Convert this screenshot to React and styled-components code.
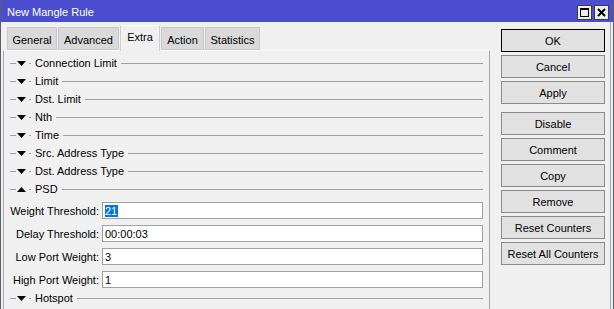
import React from 'react';
import styled, { createGlobalStyle } from 'styled-components';

const GlobalStyle = createGlobalStyle`
  body {
    margin: 0;
    background: #f0f0f0;
    font-family: "Liberation Sans", Arial, sans-serif;
    font-size: 11px;
    color: #000;
  }
`;

const Window = styled.div`
  width: 614px;
  height: 309px;
  box-sizing: border-box;
  border-left: 1px solid #5c5c6c;
  border-right: 1px solid #5c5c6c;
  background: #f0f0f0;
  display: flex;
  flex-direction: column;
  overflow: hidden;
`;

const TitleBar = styled.div`
  height: 22px;
  flex-shrink: 0;
  background: #4b4fcf;
  color: #fff;
  display: flex;
  align-items: center;
  padding: 2px 4px 0 6px;
  box-sizing: border-box;
  font-size: 11px;
`;

const Title = styled.span`
  flex: 1;
`;

const TitleButton = styled.div`
  width: 15px;
  height: 15px;
  box-sizing: border-box;
  margin-left: 2px;
  background: #ececec;
  border: 1px solid #3c3c3c;
  display: flex;
  align-items: center;
  justify-content: center;
`;

const Body = styled.div`
  flex: 1;
  display: flex;
  min-height: 0;
  border-right: 1px solid #a8a8a8;
  margin-right: 2px;
`;

const LeftCol = styled.div`
  width: 487px;
  margin-left: 2px;
  display: flex;
  flex-direction: column;
`;

const TabStrip = styled.div`
  height: 28px;
  display: flex;
  align-items: flex-end;
  padding-left: 4px;
  position: relative;
  z-index: 1;
`;

const Tab = styled.div`
  width: ${p => p.$w}px;
  height: ${p => (p.$active ? 26 : 23)}px;
  margin-bottom: ${p => (p.$active ? -1 : 0)}px;
  margin-right: 1px;
  box-sizing: border-box;
  background: ${p => (p.$active ? '#f0f0f0' : '#d9d9d9')};
  border: 1px solid ${p => (p.$active ? '#d0d0d0' : '#c8c8c8')};
  border-bottom: ${p => (p.$active ? 'none' : '1px solid #c8c8c8')};
  border-top-color: ${p => (p.$active ? '#fff' : '#c8c8c8')};
  display: flex;
  justify-content: center;
  padding-top: ${p => (p.$active ? 5 : 6)}px;
  font-size: 11px;
`;

const Panel = styled.div`
  flex: 1;
  border-top: 1px solid #fff;
  border-left: 1px solid #a8a8a8;
  border-right: 1px solid #a8a8a8;
  padding-top: 3px;
  display: flex;
  flex-direction: column;
`;

const SectionRow = styled.div`
  height: 18px;
  flex-shrink: 0;
  display: flex;
  align-items: center;
  margin-top: ${p => p.$mt || 0}px;
`;

const Rule = styled.div`
  height: 1px;
  background: #a0a0a0;
  width: ${p => (p.$w ? `${p.$w}px` : 'auto')};
  flex: ${p => (p.$w ? '0 0 auto' : '1')};
  margin-left: ${p => p.$ml || 0}px;
  margin-right: ${p => p.$mr || 0}px;
`;

const Arrow = styled.svg`
  margin-left: 1px;
  flex-shrink: 0;
`;

const SectionLabel = styled.span`
  margin-left: 4px;
  margin-right: 4px;
  font-size: 11px;
  white-space: nowrap;
`;

const Fields = styled.div`
  display: flex;
  flex-direction: column;
  gap: 6px;
  margin-top: 4px;
`;

const FieldRow = styled.div`
  display: flex;
  align-items: center;
  height: 17px;
`;

const FieldLabel = styled.label`
  width: 95px;
  text-align: right;
  font-size: 11px;
  white-space: nowrap;
  margin-right: 3px;
`;

const Input = styled.div`
  flex: 1;
  height: 17px;
  box-sizing: border-box;
  margin-right: 6px;
  background: #fff;
  border: 1px solid #a2a2a2;
  padding: 0 2px;
  display: flex;
  align-items: center;
  font-size: 11px;
`;

const Selected = styled.span`
  background: #0078d7;
  color: #fff;
  line-height: 12px;
  padding-right: 1px;
`;

const RightCol = styled.div`
  width: 104px;
  margin-left: 11px;
  padding-top: 7px;
  display: flex;
  flex-direction: column;
  gap: 3px;
`;

const Button = styled.div`
  height: 23px;
  box-sizing: border-box;
  background: #e1e1e1;
  border: 1px solid ${p => (p.$default ? '#000' : '#8a8a8a')};
  display: flex;
  align-items: center;
  justify-content: center;
  font-size: 11px;
  margin-top: ${p => p.$mt || 0}px;
`;

const Section = ({ label, open, mt }) => (
  <SectionRow $mt={mt}>
    <Rule $w={6} $ml={6} />
    <Arrow width="9" height="5" viewBox="0 0 9 5">
      {open ? <polygon points="0,5 9,5 4.5,0" fill="#000" /> : <polygon points="0,0 9,0 4.5,5" fill="#000" />}
    </Arrow>
    <Rule $w={2} $ml={3} />
    <SectionLabel>{label}</SectionLabel>
    <Rule $mr={6} />
  </SectionRow>
);

const tabs = [
  { name: 'General', w: 50 },
  { name: 'Advanced', w: 61 },
  { name: 'Extra', w: 40, active: true },
  { name: 'Action', w: 43 },
  { name: 'Statistics', w: 55 },
];

const collapsed = ['Connection Limit', 'Limit', 'Dst. Limit', 'Nth', 'Time', 'Src. Address Type', 'Dst. Address Type'];

const buttons = [
  { label: 'OK', def: true },
  { label: 'Cancel' },
  { label: 'Apply' },
  { label: 'Disable', mt: 5 },
  { label: 'Comment' },
  { label: 'Copy' },
  { label: 'Remove' },
  { label: 'Reset Counters' },
  { label: 'Reset All Counters' },
];

export default function App() {
  return (
    <>
      <GlobalStyle />
      <Window>
        <TitleBar>
          <Title>New Mangle Rule</Title>
          <TitleButton>
            <svg width="9" height="9" viewBox="0 0 9 9">
              <rect x="0.5" y="0.5" width="8" height="8" fill="none" stroke="#000" />
              <rect x="0" y="0" width="9" height="2" fill="#000" />
            </svg>
          </TitleButton>
          <TitleButton>
            <svg width="9" height="9" viewBox="0 0 9 9">
              <path d="M1 1 L8 8 M8 1 L1 8" stroke="#000" strokeWidth="2" />
            </svg>
          </TitleButton>
        </TitleBar>
        <Body>
          <LeftCol>
            <TabStrip>
              {tabs.map(t => (
                <Tab key={t.name} $w={t.w} $active={t.active}>{t.name}</Tab>
              ))}
            </TabStrip>
            <Panel>
              {collapsed.map(l => <Section key={l} label={l} />)}
              <Section label="PSD" open />
              <Fields>
                <FieldRow>
                  <FieldLabel>Weight Threshold:</FieldLabel>
                  <Input><Selected>21</Selected></Input>
                </FieldRow>
                <FieldRow>
                  <FieldLabel>Delay Threshold:</FieldLabel>
                  <Input>00:00:03</Input>
                </FieldRow>
                <FieldRow>
                  <FieldLabel>Low Port Weight:</FieldLabel>
                  <Input>3</Input>
                </FieldRow>
                <FieldRow>
                  <FieldLabel>High Port Weight:</FieldLabel>
                  <Input>1</Input>
                </FieldRow>
              </Fields>
              <Section label="Hotspot" mt={1} />
            </Panel>
          </LeftCol>
          <RightCol>
            {buttons.map(b => (
              <Button key={b.label} $default={b.def} $mt={b.mt}>{b.label}</Button>
            ))}
          </RightCol>
        </Body>
      </Window>
    </>
  );
}
